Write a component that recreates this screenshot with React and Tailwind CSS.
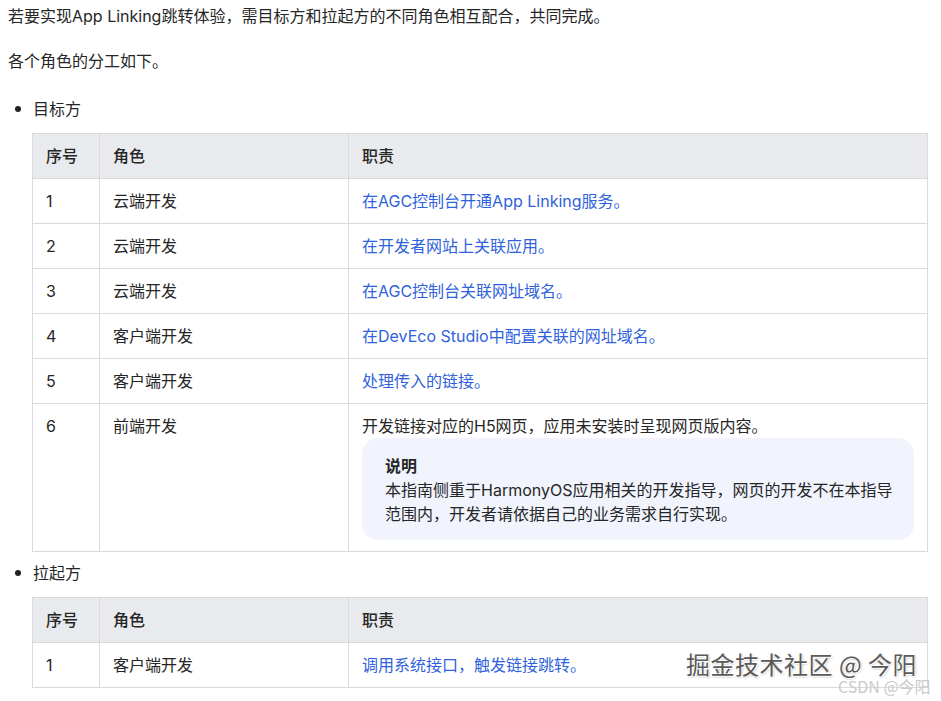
const font = { fontFamily: '"Inter", "Noto Sans CJK SC", sans-serif' };

const targetRows = [
  ["1", "云端开发", "在AGC控制台开通App Linking服务。"],
  ["2", "云端开发", "在开发者网站上关联应用。"],
  ["3", "云端开发", "在AGC控制台关联网址域名。"],
  ["4", "客户端开发", "在DevEco Studio中配置关联的网址域名。"],
  ["5", "客户端开发", "处理传入的链接。"],
];

function Bullet({ children }) {
  return (
    <div className="flex items-center h-6 pl-[15px]">
      <span className="w-[6px] h-[6px] rounded-full bg-[#222] mr-[12px]"></span>
      <span>{children}</span>
    </div>
  );
}

function Head() {
  return (
    <thead>
      <tr className="bg-[#e8eaee]">
        <th className="w-[67px] text-left font-medium px-[13px] py-[10px] border border-[#dadada]">序号</th>
        <th className="w-[249px] text-left font-medium px-[13px] py-[10px] border border-[#dadada]">角色</th>
        <th className="text-left font-medium px-[13px] py-[10px] border border-[#dadada]">职责</th>
      </tr>
    </thead>
  );
}

function Cell({ children, link }) {
  return (
    <td className={"align-top px-[13px] py-[10px] border border-[#dadada] " + (link ? "text-[#2f62dc]" : "")}>
      {children}
    </td>
  );
}

export default function App() {
  return (
    <div className="relative w-[941px] h-[701px] bg-white text-[16px] leading-6 text-[#262626] overflow-hidden" style={font}>
      <div className="pl-[8px] pt-[4px]">
        <p>若要实现App Linking跳转体验，需目标方和拉起方的不同角色相互配合，共同完成。</p>
        <p className="mt-[21px]">各个角色的分工如下。</p>
      </div>

      <div className="mt-[24px]">
        <Bullet>目标方</Bullet>
        <table className="ml-[32px] mt-[12px] w-[896px] border-collapse table-fixed">
          <Head />
          <tbody>
            {targetRows.map((r) => (
              <tr key={r[0]}>
                <Cell>{r[0]}</Cell>
                <Cell>{r[1]}</Cell>
                <Cell link>{r[2]}</Cell>
              </tr>
            ))}
            <tr>
              <Cell>6</Cell>
              <Cell>前端开发</Cell>
              <td className="align-top px-[13px] pt-[10px] pb-[11px] border border-[#dadada]">
                <div>开发链接对应的H5网页，应用未安装时呈现网页版内容。</div>
                <div className="rounded-[16px] bg-[#f1f4fd] pl-[23px] pr-4 pt-[16px] pb-[14px]">
                  <div className="font-semibold">说明</div>
                  <div>
                    本指南侧重于HarmonyOS应用相关的开发指导，网页的开发不在本指导
                    <br />
                    范围内，开发者请依据自己的业务需求自行实现。
                  </div>
                </div>
              </td>
            </tr>
          </tbody>
        </table>
      </div>

      <div className="mt-[9px]">
        <Bullet>拉起方</Bullet>
        <table className="ml-[32px] mt-[12px] w-[896px] border-collapse table-fixed">
          <Head />
          <tbody>
            <tr>
              <Cell>1</Cell>
              <Cell>客户端开发</Cell>
              <Cell link>调用系统接口，触发链接跳转。</Cell>
            </tr>
          </tbody>
        </table>
      </div>

      <div
        className="absolute left-[686px] top-[648px] text-[24px] leading-8 text-[#5a5a5a] tracking-[0.5px]"
        style={{ fontFamily: '"Noto Sans CJK SC", sans-serif', textShadow: "1px 1px 0 #fff, -1px -1px 0 #fff, 1px 1px 2px #999" }}
      >
        掘金技术社区 @ 今阳
      </div>
      <div
        className="absolute left-[838px] top-[676px] text-[16px] leading-5 text-[#cacaca]"
        style={{ fontFamily: '"Noto Sans CJK SC", sans-serif' }}
      >
        CSDN @今阳
      </div>
    </div>
  );
}
